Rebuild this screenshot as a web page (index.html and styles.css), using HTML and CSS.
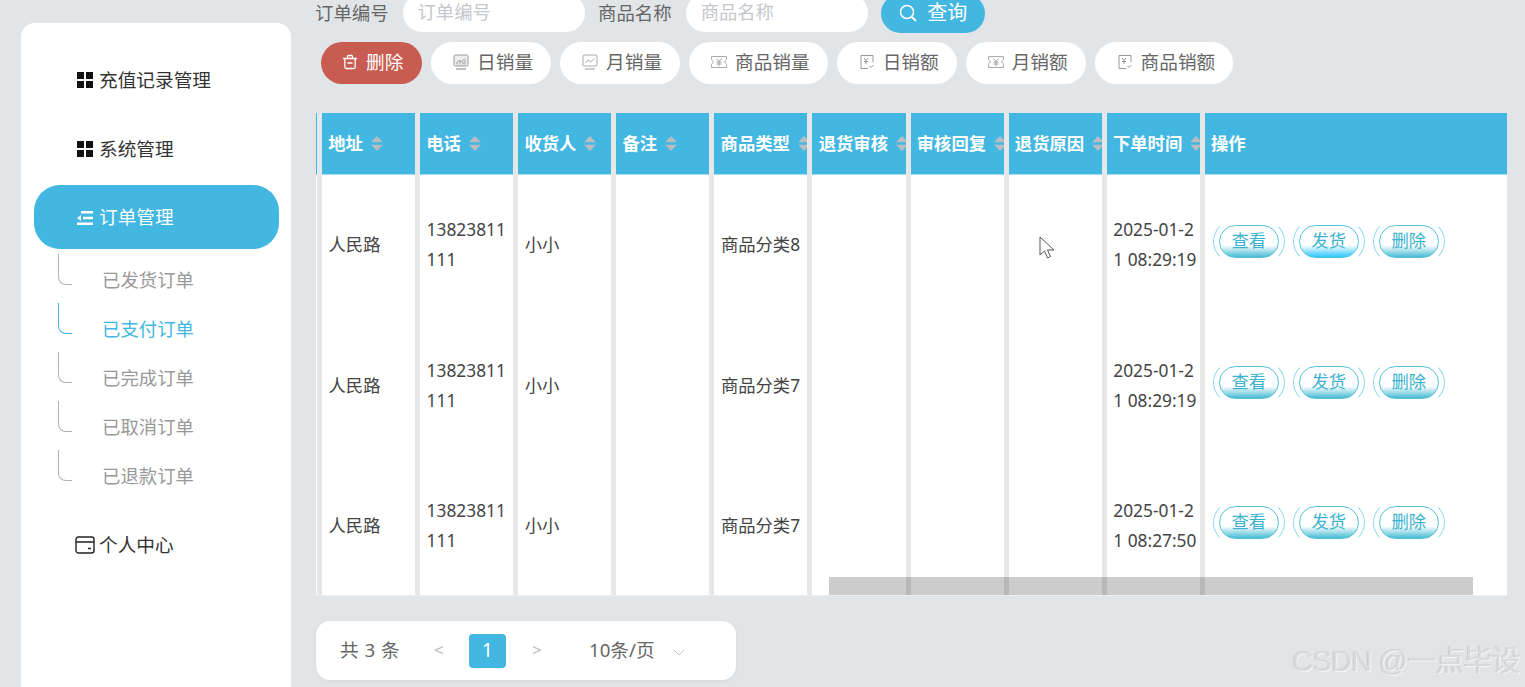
FILE: index.html
```html
<!DOCTYPE html>
<html lang="zh">
<head>
<meta charset="utf-8">
<title>订单管理</title>
<link rel="stylesheet" href="styles.css">
</head>
<body>
<svg class="defs" width="0" height="0" aria-hidden="true">
  <symbol id="i-grid" viewBox="0 0 16 16"><path d="M0 0h7v7H0zM9 0h7v7H9zM0 9h7v7H0zM9 9h7v7H9z" fill="currentColor"/></symbol>
  <symbol id="i-caret" viewBox="0 0 12 15"><path d="M6 0l6 6.200H0zM0 8.800h12l-6 6.200z" fill="#b8bdc2"/></symbol>
  <symbol id="i-monitor" viewBox="0 0 16 16"><rect x="1" y="1" width="14" height="11" rx="1.500" fill="#eee" stroke="#999"/><path d="M3 15h10" stroke="#aaa" stroke-width="1.500"/><path d="M3.500 9l3-3 2 2 3.500-3.500M4 10.500V9M7 10.500V7M10 10.500V8M12 10.500V6" fill="none" stroke="#999"/></symbol>
  <symbol id="i-line" viewBox="0 0 16 16"><rect x="1" y="1" width="14" height="11" rx="1" fill="none" stroke="#aaa"/><path d="M3 15h10" stroke="#bbb" stroke-width="1.500"/><path d="M3.500 9l3-3 2 2 4-3.500" fill="none" stroke="#aaa"/></symbol>
  <symbol id="i-ticket" viewBox="0 0 16 16"><path d="M.5 2.500h15v3l-2 2.500 2 2.500v3H.5v-3l2-2.500-2-2.500z" fill="none" stroke="#aaa"/><path d="M5.500 4.500L8 7.500l2.500-3M8 7.500V12M5.500 8h5M5.500 10h5" fill="none" stroke="#999" stroke-width=".9"/></symbol>
  <symbol id="i-doc" viewBox="0 0 16 16"><path d="M14 8V1.500H2v13h7" fill="none" stroke="#999"/><path d="M5 4l2 2.500L9 4M7 6.500V10M5 7.500h4M10.500 12l1.500 1.500 2.500-2.500" fill="none" stroke="#999"/></symbol>
</svg>

<aside class="sidebar">
  <nav class="menu">
    <a class="menu-item"><span class="menu-icon"><svg class="ico16"><use href="#i-grid"/></svg></span>充值记录管理</a>
    <a class="menu-item"><span class="menu-icon"><svg class="ico16"><use href="#i-grid"/></svg></span>系统管理</a>
    <a class="menu-item is-active"><span class="menu-icon"><svg class="ico16" viewBox="0 0 16 16"><path d="M4 1h12v2.400H4zM6 6.800h10v2.400H6zM0 12.600h16V15H0zM0 8l4-3v6z" fill="currentColor"/></svg></span>订单管理</a>
    <div class="submenu">
      <a class="sub-item">已发货订单</a>
      <a class="sub-item is-current">已支付订单</a>
      <a class="sub-item">已完成订单</a>
      <a class="sub-item">已取消订单</a>
      <a class="sub-item">已退款订单</a>
    </div>
    <a class="menu-item"><span class="menu-icon"><svg class="ico-wallet" viewBox="0 0 20 18"><rect x="1" y="1" width="18" height="16" rx="2.500" fill="none" stroke="#222" stroke-width="1.400"/><path d="M1 6h18M13 12.500h3" stroke="#222" stroke-width="1.400"/></svg></span>个人中心</a>
  </nav>
</aside>

<main class="main">
  <form class="search">
    <label class="search-label">订单编号</label>
    <input class="search-input" placeholder="订单编号">
    <label class="search-label">商品名称</label>
    <input class="search-input" placeholder="商品名称">
    <button type="button" class="search-btn"><svg class="ico18" viewBox="0 0 18 18"><circle cx="8" cy="8" r="6.500" fill="none" stroke="#fff" stroke-width="1.500"/><path d="M13 13l4 4" stroke="#fff" stroke-width="2"/></svg>查询</button>
  </form>

  <div class="tools">
    <button type="button" class="pill pill-danger"><svg class="ico16" viewBox="0 0 16 16"><path d="M1 4.500h14M5.500 4.500V2.500a1 1 0 0 1 1-1h3a1 1 0 0 1 1 1v2M2.800 4.500V13a1.500 1.500 0 0 0 1.500 1.500h7.400a1.500 1.500 0 0 0 1.500-1.500V4.500M5.500 9h5" fill="none" stroke="#fff" stroke-width="1.300"/></svg>删除</button>
    <button type="button" class="pill"><svg class="ico16"><use href="#i-monitor"/></svg>日销量</button>
    <button type="button" class="pill"><svg class="ico16"><use href="#i-line"/></svg>月销量</button>
    <button type="button" class="pill"><svg class="ico16"><use href="#i-ticket"/></svg>商品销量</button>
    <button type="button" class="pill"><svg class="ico16"><use href="#i-doc"/></svg>日销额</button>
    <button type="button" class="pill"><svg class="ico16"><use href="#i-ticket"/></svg>月销额</button>
    <button type="button" class="pill"><svg class="ico16"><use href="#i-doc"/></svg>商品销额</button>
  </div>

  <div class="table-wrap">
    <table class="table">
      <colgroup>
        <col class="col-edge"><col class="col-n"><col class="col-n"><col class="col-n"><col class="col-n"><col class="col-n"><col class="col-n"><col class="col-n"><col class="col-n"><col class="col-n"><col class="col-last">
      </colgroup>
      <thead>
        <tr>
          <th></th>
          <th><div class="th-in">地址<svg class="caret"><use href="#i-caret"/></svg></div></th>
          <th><div class="th-in">电话<svg class="caret"><use href="#i-caret"/></svg></div></th>
          <th><div class="th-in">收货人<svg class="caret"><use href="#i-caret"/></svg></div></th>
          <th><div class="th-in">备注<svg class="caret"><use href="#i-caret"/></svg></div></th>
          <th><div class="th-in">商品类型<svg class="caret"><use href="#i-caret"/></svg></div></th>
          <th><div class="th-in">退货审核<svg class="caret"><use href="#i-caret"/></svg></div></th>
          <th><div class="th-in">审核回复<svg class="caret"><use href="#i-caret"/></svg></div></th>
          <th><div class="th-in">退货原因<svg class="caret"><use href="#i-caret"/></svg></div></th>
          <th><div class="th-in">下单时间<svg class="caret"><use href="#i-caret"/></svg></div></th>
          <th><div class="th-in">操作</div></th>
        </tr>
      </thead>
      <tbody>
        <tr>
          <td></td><td>人民路</td><td>13823811111</td><td>小小</td><td></td><td>商品分类8</td><td></td><td></td><td></td><td>2025-01-21 08:29:19</td>
          <td class="actions"><div class="acts"><a class="act">查看</a><a class="act act-bright">发货</a><a class="act">删除</a></div></td>
        </tr>
        <tr>
          <td></td><td>人民路</td><td>13823811111</td><td>小小</td><td></td><td>商品分类7</td><td></td><td></td><td></td><td>2025-01-21 08:29:19</td>
          <td class="actions"><div class="acts"><a class="act">查看</a><a class="act">发货</a><a class="act">删除</a></div></td>
        </tr>
        <tr>
          <td></td><td>人民路</td><td>13823811111</td><td>小小</td><td></td><td>商品分类7</td><td></td><td></td><td></td><td>2025-01-21 08:27:50</td>
          <td class="actions"><div class="acts"><a class="act">查看</a><a class="act">发货</a><a class="act">删除</a></div></td>
        </tr>
      </tbody>
    </table>
    <div class="hscroll"></div>
  </div>

  <div class="pager">
    <span class="pager-total">共 3 条</span>
    <span class="pager-arrow pager-prev">&lt;</span>
    <span class="pager-num">1</span>
    <span class="pager-arrow pager-next">&gt;</span>
    <span class="pager-size">10条/页</span>
    <svg class="pager-chev" viewBox="0 0 12 7"><path d="M1 1l5 5 5-5" fill="none" stroke="#c0c4cc"/></svg>
  </div>
</main>

<svg class="cursor" viewBox="0 0 16 24"><path d="M1 1v18l4.500-4 3 7 3-1.500-3-6.500H15z" fill="#fff" stroke="#555" stroke-width="1"/></svg>
<div class="watermark">CSDN @一点毕设</div>
</body>
</html>
```
FILE: styles.css
```css
* { box-sizing: border-box; }
html, body { margin: 0; height: 100%; }
body {
  position: relative;
  display: flex;
  align-items: flex-start;
  height: 687px;
  overflow: hidden;
  background: #e1e5e8;
  font-family: "Noto Sans", "Noto Sans CJK SC", sans-serif;
  line-height: 1.2;
  color: #444;
}
.defs { position: absolute; }
.ico16 { width: 16px; height: 16px; flex: none; display: block; }
.ico18 { width: 18px; height: 18px; flex: none; display: block; }
.ico-wallet { width: 20px; height: 18px; display: block; }

/* sidebar */
.sidebar {
  flex: none;
  width: 270px;
  height: 664px;
  margin: 23px 0 0 21px;
  padding: 25px 12px 0 13px;
  background: #fff;
  border-radius: 14px 14px 0 0;
}
.menu { display: flex; flex-direction: column; }
.menu-item {
  display: flex;
  align-items: center;
  height: 64px;
  margin-bottom: 5px;
  padding-left: 41px;
  border-radius: 26px;
  font-size: 18.67px;
  color: #333;
}
.menu-item.is-active { margin-bottom: 0; margin-top: -1px; padding-top: 1px; background: #42b7e2; color: #fff; }
.menu-icon { width: 20px; margin-right: 4px; display: flex; justify-content: center; color: #111; }
.is-active .menu-icon { color: #fff; }
.submenu { display: flex; flex-direction: column; margin: 6px 0 13px; }
.sub-item {
  position: relative;
  display: flex;
  align-items: center;
  height: 49px;
  padding: 2px 0 0 68px;
  font-size: 18.4px;
  color: #999;
}
.sub-item::before {
  content: "";
  position: absolute;
  left: 24px;
  top: -1px;
  width: 13px;
  height: 30px;
  border-left: 1.5px solid #b0b0b0;
  border-bottom: 1.5px solid #b0b0b0;
  border-bottom-left-radius: 8px;
}
.sub-item.is-current { color: #42b7e2; }
.sub-item.is-current::before { border-color: #42b7e2; }

/* main */
.main { flex: none; width: 1191px; margin: -6px 0 0 25px; }
.search { display: flex; align-items: center; height: 38px; margin-left: -1px; }
.search-label { font-size: 18.4px; color: #666; margin-right: 14px; white-space: nowrap; }
.search-input {
  width: 182.5px;
  height: 38px;
  margin-right: 13px;
  padding: 0 15px 3px;
  border: 0;
  border-radius: 19px;
  background: #fff;
  font: inherit;
  font-size: 18.3px;
}
.search-input::placeholder { color: #c4c7cd; }
.search-btn {
  display: flex;
  align-items: center;
  gap: 10px;
  width: 104px;
  height: 39px;
  padding: 0 0 0 18px;
  border: 0;
  border-radius: 20px;
  background: #42b7e2;
  color: #fff;
  font: inherit;
  font-size: 20px;
}

.tools { display: flex; gap: 9px; margin-top: 10px; padding-left: 5px; }
.pill {
  display: flex;
  align-items: center;
  gap: 8px;
  height: 42px;
  padding: 0 18px 2px 22px;
  border: 0;
  border-radius: 21px;
  background: #fff;
  color: #666;
  font: inherit;
  font-size: 18.67px;
  white-space: nowrap;
}
.pill-danger { padding-left: 21px; padding-right: 18.8px; background: #c95c50; color: #fff; }

/* table */
.table-wrap {
  position: relative;
  height: 482px;
  margin-top: 29px;
  overflow: hidden;
  background: #e5e7e8;
  box-shadow: 0 1px 0 #eceeef;
}
.table {
  width: 1200.9px;
  margin-left: -5px;
  table-layout: fixed;
  border-collapse: separate;
  border-spacing: 5px 0;
  font-size: 17.33px;
}
.col-edge { width: 1px; }
.col-n { width: 93.1px; }
.col-last { width: 302px; }
.table th {
  height: 62px;
  padding: 0;
  background: #42b7e2;
  border-bottom: 1px solid #a9dcf1;
  overflow: hidden;
  color: #fff;
  text-align: left;
}
.th-in { display: flex; align-items: center; padding-left: 6.2px; font-weight: 700; white-space: nowrap; }
.caret { flex: none; width: 12px; height: 15px; margin-left: 8px; }
.table td {
  height: 140.5px;
  padding: 0 0 2px 6.5px;
  background: #fff;
  line-height: 30px;
  color: #444;
  word-break: break-all;
}
.table td.actions { padding: 0 0 7px 14px; }
.acts { display: flex; gap: 20px; }
.act {
  position: relative;
  display: flex;
  align-items: center;
  justify-content: center;
  width: 60px;
  height: 33px;
  padding-bottom: 2px;
  border: 1px solid #53c0d8;
  border-radius: 16.5px;
  background: linear-gradient(#fff 62%, #47bcd4);
  color: #3bb3ce;
  font-size: 17.33px;
  line-height: 1.2;
}
.act-bright { border-color: #4cc4e4; background: linear-gradient(#fff 62%, #2cc6fb); }
.act::before {
  content: "";
  position: absolute;
  inset: -6px -7px;
  border: 1px solid;
  border-color: transparent #97dcee;
  border-radius: 23px;
}
.hscroll {
  position: absolute;
  left: 513px;
  right: 34px;
  bottom: 0;
  height: 18px;
  background: rgba(0, 0, 0, .2);
}

/* pager */
.pager {
  display: flex;
  align-items: center;
  width: 420px;
  height: 59px;
  margin-top: 26px;
  padding-left: 24px;
  background: #fff;
  border-radius: 14px;
  box-shadow: 0 1px 4px rgba(0, 0, 0, .05);
  font-size: 18.67px;
  color: #666;
}
.pager-total { width: 94px; word-spacing: 1px; white-space: nowrap; }
.pager-arrow { width: 10px; font-size: 17px; color: #bbb; }
.pager-next { margin-left: 1px; }
.pager-num {
  display: flex;
  align-items: center;
  justify-content: center;
  width: 37px;
  height: 34px;
  margin: 0 25px;
  background: #42b7e2;
  border-radius: 4px;
  color: #fff;
  font-size: 19px;
}
.pager-size { margin-left: 47px; white-space: nowrap; }
.pager-chev { width: 12px; height: 7px; margin: 3px 0 0 18px; }

/* overlays */
.cursor { position: absolute; left: 1039px; top: 236px; width: 16px; height: 24px; }
.watermark {
  position: absolute;
  right: 5px;
  top: 641px;
  font-family: "Liberation Sans", "Noto Sans CJK SC", sans-serif;
  font-size: 29px;
  letter-spacing: -.8px;
  line-height: 40px;
  color: #d7dbde;
  text-shadow: 1px 1px 0 #f4f5f6, -.5px -.5px 0 #bcc0c4;
  white-space: nowrap;
}
```
